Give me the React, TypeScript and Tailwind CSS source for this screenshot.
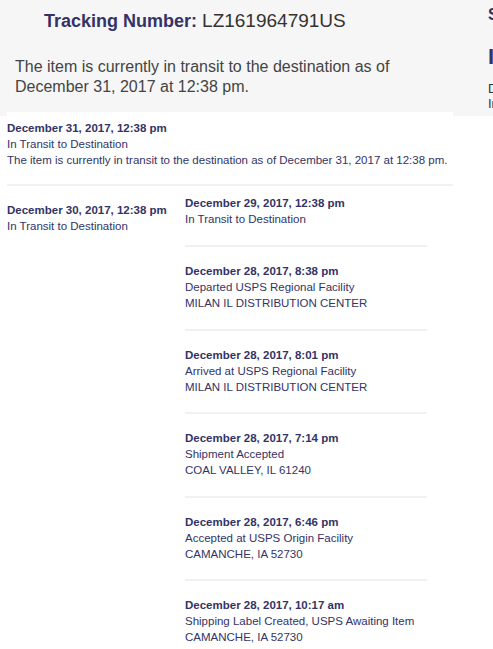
import React from "react";

const entries = [
  { date: "December 28, 2017, 8:38 pm", status: "Departed USPS Regional Facility", loc: "MILAN IL DISTRIBUTION CENTER" },
  { date: "December 28, 2017, 8:01 pm", status: "Arrived at USPS Regional Facility", loc: "MILAN IL DISTRIBUTION CENTER" },
  { date: "December 28, 2017, 7:14 pm", status: "Shipment Accepted", loc: "COAL VALLEY, IL 61240" },
  { date: "December 28, 2017, 6:46 pm", status: "Accepted at USPS Origin Facility", loc: "CAMANCHE, IA 52730" },
  { date: "December 28, 2017, 10:17 am", status: "Shipping Label Created, USPS Awaiting Item", loc: "CAMANCHE, IA 52730" },
];

export default function App() {
  return (
    <div
      className="w-[493px] h-[649px] overflow-hidden bg-white flex"
      style={{ fontFamily: '"Liberation Sans", Arial, sans-serif' }}
    >
      <div className="w-[453px] shrink-0 flex flex-col">
        <div className="h-[116px] bg-[#f6f6f6] shrink-0">
          <div className="pt-[9px] pl-[44px] text-[18px] leading-[24px] whitespace-nowrap">
            <span className="font-bold text-[#333366]">Tracking Number:</span>{" "}
            <span className="text-[19px] text-[#333333]">LZ161964791US</span>
          </div>
          <div className="mt-[24px] pl-[15px] pr-[40px] text-[16px] leading-[20px] text-[#444444]">
            The item is currently in transit to the destination as of December 31, 2017 at 12:38 pm.
          </div>
        </div>
        <div className="-mt-[4px] ml-[7px] bg-white text-[11.5px] leading-[16px] text-[#333366]">
          <div className="pt-[8px] pb-[16px]">
            <div className="font-bold">December 31, 2017, 12:38 pm</div>
            <div>In Transit to Destination</div>
            <div className="whitespace-nowrap">
              The item is currently in transit to the destination as of December 31, 2017 at 12:38 pm.
            </div>
          </div>
          <div className="h-[2px] bg-[#f1f1f1]" />
          <div className="flex">
            <div className="w-[178px] shrink-0 pt-[16px]">
              <div className="font-bold">December 30, 2017, 12:38 pm</div>
              <div>In Transit to Destination</div>
            </div>
            <div className="w-[242px] shrink-0">
              <div className="pt-[9px] pb-[18px]">
                <div className="font-bold">December 29, 2017, 12:38 pm</div>
                <div>In Transit to Destination</div>
              </div>
              {entries.map((e) => (
                <div key={e.date + e.status}>
                  <div className="h-[2px] bg-[#f1f1f1]" />
                  <div className="pt-[16px] pb-[17.5px]">
                    <div className="font-bold">{e.date}</div>
                    <div>{e.status}</div>
                    <div>{e.loc}</div>
                  </div>
                </div>
              ))}
            </div>
          </div>
        </div>
      </div>
      <div className="flex-1 min-w-0 overflow-hidden">
        <div className="h-[116px] bg-[#f6f6f6] pl-[35px] whitespace-nowrap">
          <div className="pt-[5px] text-[16px] leading-[20px] font-bold text-[#333366]">Status</div>
          <div className="mt-[18px] text-[22px] leading-[28px] font-bold text-[#333366]">In Transit</div>
          <div className="mt-[10px] text-[13px] leading-[15px] text-[#333333]">December 31, 2017 at 12:38 pm</div>
          <div className="text-[13px] leading-[15px] text-[#333333]">In Transit to Destination</div>
        </div>
      </div>
    </div>
  );
}
